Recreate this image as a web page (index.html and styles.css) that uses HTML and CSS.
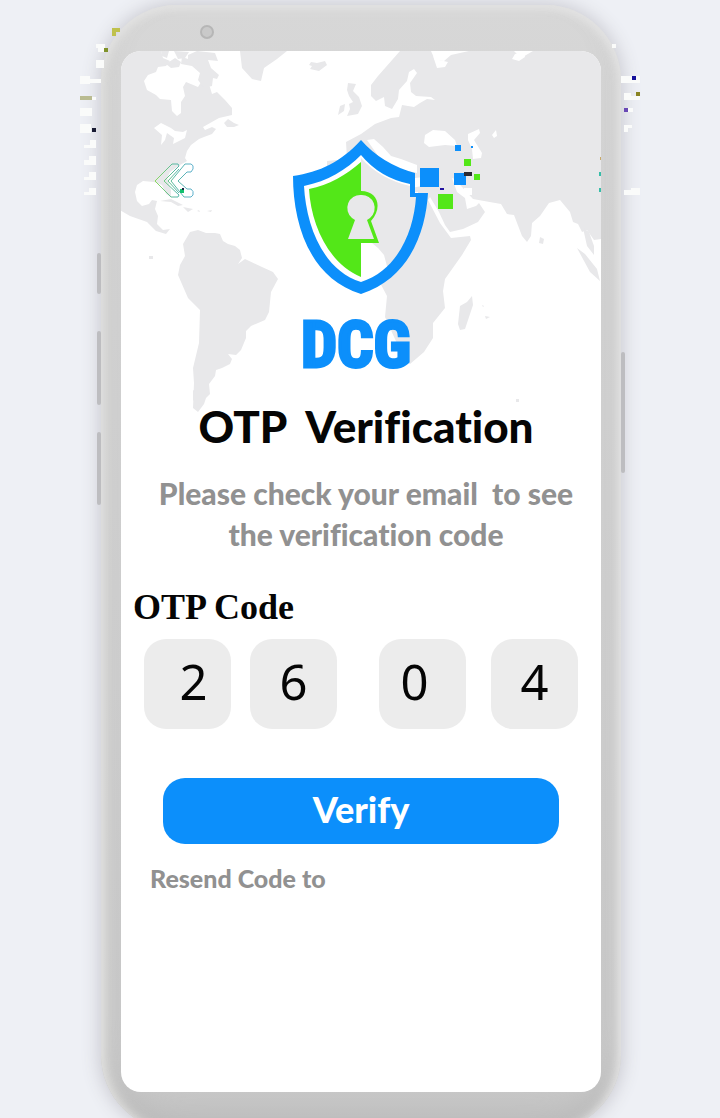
FILE: index.html
```html
<!DOCTYPE html>
<html lang="en">
<head>
<meta charset="utf-8">
<meta name="viewport" content="width=device-width, initial-scale=1">
<title>OTP Verification</title>
<link rel="stylesheet" href="styles.css">
</head>
<body>
<div class="stage">
<div class="phone">
  <svg class="specks" viewBox="80 28 560 170" aria-hidden="true">
    <g fill="#fafbfa">
      <path d="M96 44h9v8h-7v-4h-2zM96 60h8v8h-8zM80 76h10v3h11v4H90v1H80zM92 97h4v3h-4zM80 108h12v8H80zM80 124h11v9H80zM84 145h6v-5h6v8H84zM84 160h5v-4h7v9H84zM84 177h5v-5h7v8H84zM84 192h5v-4h7v7H84z"/>
      <path d="M612 44h4v4h-4zM621 76h19v7h-19zM624 93h7v3h9v4h-16zM624 108h9v4h-9zM624 125h8v3h-4v4h-4zM624 190h7v-2h9v7h-16z"/>
    </g>
    <path fill="#bfc14c" d="M112 28h8v4h-4v4h-4z"/>
    <path fill="#7f922b" d="M104 48h4v4h-4z"/>
    <path fill="#b9bb91" d="M80 96h12v4H80z"/>
    <path fill="#181a32" d="M92 128h4v4h-4z"/>
    <path fill="#16119b" d="M632 76h4v4h-4z"/>
    <path fill="#8a8423" d="M636 92h4v4h-4z"/>
    <path fill="#6948b5" d="M624 108h4v4h-4z"/>
  </svg>
  <span class="camera"></span>
  <span class="key key-mute"></span>
  <span class="key key-up"></span>
  <span class="key key-down"></span>
  <span class="key key-power"></span>
  <main class="screen">
    <svg class="map" viewBox="121 51 480 370" aria-hidden="true">
      <g fill="#e8e8ea">
        <path d="M121 51h40l2 7 7 3-4 5-8 1-2 5-8 3-4 6 3 9 9 5 4 4 11 1 1 11 5 5 4-3v-11l4-6-2-9 3-5 12 5 5-8 6 5 3 10 5-2 8 8 7 8v7l-13 3-16 9 2 3 7-3 4 2-4 5-8 3-5 2-8 6-4 6-2 7 2 3-7 4-10 7-3 6 4 12v7l-5-3-4-9-8-3-11-1-6 4-2 7 2 9 5 5 7-2 3-4 5 1-2 8 3 7-1 8 6 6 7-1-4 5-10-3-9-9-17-6-12-7z"/>
        <path d="M161 51h8l-2 7-5-2zM174 51l15 1-4 6-7 1zM166 64l9-6 6 4-2 5-8 1zM188 55l9-4 18 2 3 8-10-1 3 8 8 7-2 4-4-1-1 8-8 2-6-8 2-7-8-7-11-2 1-7 6 2zM224 123l4-4 6 4 5 2-5 2-7 0zM183 102l7-1 4 4-5 2zM160 201l11-2 12 6-5 1-7-4zM183 207l10 2-5 3zM197 211l2-1 1 2zM207 211l5-1-1 2z"/>
        <path d="M190 232l8-2 8 3h9l5 1 3 7 5 3 7 2 5 4 2 8-4 6 7-5 17 8 11 5 5 7-7 13-2 20-4 8-14 6-5 5v7l-5 12-5 5-8-1 4 5-2 5-8 4-6 2-1 6-6 8 1 10-4 4-2 6-6 8-5-4 1-25-1-15 6-25 1-33-12-12-10-23 2-10 5-9-2-12z"/>
        <path d="M240 51h47l-10 8-13 9-3 13-9-2-10-11zM311 62l6 1 8-2 2 4-8 6-9-2 2-3-3-1zM348 83l8 1-3 7 6 6 3 9-4 8-11 2 3-7-1-5 4-2-4-6-2-6zM340 106l5-2-1 7-6 4zM149 256h4v3h-4zM194 374l2 1v7l-2-1zM193 390l3 2-1 10-2-2zM516 399h3v3h-3z"/>
        <path fill-rule="evenodd" d="M400 51h31l4 9 9 1 7-6 18-4h45l7 7 12-7h68v188l-7 1-7-10-5 2-4-8-5-2-3-10-10-12-11 3-9 13-8 7-1 13-4 6-5-6-8-21-7-1-6-10-17-3-11-2-11-12-7-8-3-1 5 14 8 6 2 11 9-3 3-3 6 9-7 10-15 7-13 3-5-7-6-13-9-15-2 3 12 23 11 15 19-2 1 4-9 15-17 24-2 12 2 17-12 15v15l-9 14-14 12-9-4-1-10-15-33 2-21-10-19-1-20-10-7-6 2-20-2-20-14v-35l17-23 19-2 14 4 8 6 20-2 13 4 11-2 1-9-15 2-12-3-2-8-6-10-7-1 8 12-5 8-7-12-8-6-5-2-11 6-3 9-7 8-16 1v-20l20-2-1-17 15-8 14-10 16-6 8-1 3-12 12 2 6-4 7-4 8 1-4-3-15-1-5-4-1-9 7-10-3-4-5 3-2 9-8 9-1 9-6 10-7-3-1-9-8 4-5-5v-11l7-9zM425 135l8-5 12 1 10 9 2 6-12-1-16 2-5-4zM468 134l11-5 1 4-6 7 8 13-1 5-8 1-1-10-4-9zM492 135l4-5 1 6-3 2z"/>
        <path d="M472 296l1 9-8 24-5 1-2-6 2-18 7-4zM577 248l8 6 12 15 3 12-10-9zM583 228l6 4 5 14 0 9-7-9zM540 237l4 2-1 5-4-1zM482 305l2 1-1 1zM485 316l5 1-4 2z"/>
      </g>
      <g fill="#fff">
        <path d="M154 128l7-5 10 5 4 3 8 1 4-2-2 8-12 6 1-6-7-5-2 7-4 5 1-10z"/>
        <path d="M433 56l6 4 9 2-3 5-8 1-2-6zM515 54l9-2 1 5-6 4-7-2z"/>
        <path d="M367 140l7-1 9 8 8 9 10 3 16 6v8l-22-5-14-8z"/>
        <path d="M464 188h8v7h-8z"/>
      </g>
      <path fill="#c9aa6a" d="M600 157h1v3h-1z"/>
      <path fill="#37bda8" d="M599 172h2v4h-2zM599 188h2v4h-2z"/>
    </svg>

    <header class="brand">
      <button class="back" type="button" aria-label="Back">
        <svg viewBox="153 161 44 38" width="44" height="38" aria-hidden="true">
          <defs>
            <linearGradient id="fade" x1="154" y1="0" x2="194" y2="0" gradientUnits="userSpaceOnUse">
              <stop offset="0" stop-color="#8fdc5a"/>
              <stop offset=".5" stop-color="#57b8a0"/>
              <stop offset="1" stop-color="#5fb0cf"/>
            </linearGradient>
          </defs>
          <g fill="none" stroke="url(#fade)" stroke-linejoin="round">
            <path d="M172 164h6l1 2-15 15 15 14-1 2h-7L155 181z"/>
            <path d="M179 169l-11 12 11 12"/>
            <path d="M185 164h6q3 1 2 5l-2 3h-4l-9 9 9 8h4q3 2 2 6l-2 2h-7l-13-16z"/>
          </g>
          <path fill="#12c06d" d="M180 189h4v4h-4z"/>
          <path fill="#17203f" d="M182 188h2v2h-2z"/>
        </svg>
      </button>
      <svg class="shield" viewBox="291 138 192 158" role="img" aria-label="DCG shield">
        <path fill="#fff" d="M361 152C345 168 326 180 302 184C304 226 323 270 361 284C399 270 417 229 418 192H409V183Q380 175 361 152Z"/>
        <path fill="#e8e8ea" d="M361 158Q380 179 410 186V196H417C414 232 404 254 388 270L384 255L378 248L372 243H361Z"/>
        <path fill="#0c8ffb" fill-rule="evenodd" d="M361 140C341 162 320 172 293 176C293 223 309 278 361 294C411 278 426 229 428 193H415V173Q382 164 361 140ZM361 155C346 170 328 181 304 186C306 224 322 270 361 282C399 270 414 229 416 197H410V184Q380 178 361 155Z"/>
        <path fill="#53e718" d="M361 162C346 175 329 185 309 189C311 225 329 264 361 277V243H379L371 221C383 208 378 191 361 191Z"/>
        <path fill="#e8e8ea" d="M361 195a13 13 0 0 1 9 23l-3 2 7 19h-26l7-19-3-2a13 13 0 0 1 9-23z"/>
        <path fill="#0c8ffb" d="M420 168h19v19h-19zM454 173h12v12h-12zM455 145h6v6h-6zM471 146h2v2h-2z"/>
        <path fill="#53e718" d="M438 194h15v15h-15zM464 159h7v7h-7zM474 174h6v6h-6z"/>
        <path fill="#2a2931" d="M464 172h8v4h-8z"/>
        <path fill="#21119f" d="M440 188h4v2h-4z"/>
      </svg>
      <p class="wordmark">DCG</p>
    </header>

    <form class="otp">
      <h1 class="title">OTP&nbsp; Verification</h1>
      <p class="hint">Please check your email&nbsp; to see<br>the verification code</p>
      <fieldset class="code">
        <legend class="code-label">OTP Code</legend>
        <div class="digits">
          <div class="pair">
            <input class="digit digit-end" type="text" inputmode="numeric" maxlength="1" value="2" aria-label="Digit 1">
            <input class="digit" type="text" inputmode="numeric" maxlength="1" value="6" aria-label="Digit 2">
          </div>
          <div class="pair pair-wide">
            <input class="digit digit-start" type="text" inputmode="numeric" maxlength="1" value="0" aria-label="Digit 3">
            <input class="digit" type="text" inputmode="numeric" maxlength="1" value="4" aria-label="Digit 4">
          </div>
        </div>
      </fieldset>
      <button class="verify" type="button">Verify</button>
      <a class="resend" href="#">Resend Code to</a>
    </form>
  </main>
</div>
</div>
</body>
</html>
```
FILE: styles.css
```css
* {
  box-sizing: border-box;
}

body {
  margin: 0;
  background: #eef0f5;
  font-family: Lato, "Open Sans", sans-serif;
  font-variant-ligatures: none;
}

.stage {
  display: flex;
  justify-content: center;
  align-items: flex-start;
  height: 100vh;
  padding: 5px 20px 0 22px;
  overflow: hidden;
}

.phone {
  position: relative;
  display: flex;
  flex-direction: column;
  flex: 0 1 520px;
  min-height: calc(100vh + 8px);
  padding: 46px 20px 39px;
  border-radius: 76px;
  background: linear-gradient(180deg, #d7d7d7 0%, #d3d3d3 20%, #cecece 60%, #c7c7c7 100%);
  box-shadow: 0 0 18px 2px #c9c9d0, inset 0 5px 8px #e2e2e2, inset -8px 0 12px -4px #e2e2e2, inset 10px 0 12px -4px #dcdcda, inset 0 -20px 36px -8px #b5b5b5;
}

.specks {
  position: absolute;
  top: 23px;
  left: -21px;
  width: calc(100% + 40px);
}

.camera {
  position: absolute;
  top: 20px;
  left: 99px;
  width: 14px;
  height: 14px;
  border: 2px solid #b6b6b6;
  border-radius: 50%;
  background: #c9c9c9;
}

.key {
  position: absolute;
  left: -4px;
  width: 4px;
  border-radius: 2px;
  background: #bdbdc0;
}

.key-mute {
  top: 248px;
  height: 41px;
}

.key-up {
  top: 326px;
  height: 74px;
}

.key-down {
  top: 427px;
  height: 73px;
}

.key-power {
  top: 347px;
  right: -4px;
  left: auto;
  height: 121px;
}

.screen {
  position: relative;
  display: flex;
  flex-direction: column;
  flex: 1;
  border-radius: 20px;
  background: #fff;
  overflow: hidden;
}

.map {
  position: absolute;
  top: 0;
  left: 0;
  width: 100%;
}

.brand {
  position: relative;
  display: grid;
  grid-template-columns: 170px 1fr;
  padding-top: 87px;
}

.back {
  justify-self: end;
  width: 138px;
  height: 61px;
  padding: 23px 0 0;
  border: 0;
  background: none;
  text-align: left;
  cursor: pointer;
}

.back svg {
  display: block;
}

.shield {
  width: 192px;
  height: 158px;
}

.wordmark {
  grid-column: 1 / -1;
  margin: 18px 10px 0 0;
  color: #0c8ffb;
  font: 700 64px/64px "Liberation Sans Narrow", "Roboto Condensed", "DejaVu Sans Condensed", sans-serif;
  text-align: center;
  -webkit-text-stroke: 3px #0c8ffb;
}

.otp {
  position: relative;
  display: flex;
  flex-direction: column;
  padding: 20px 12px 0;
}

.title {
  margin: 0 0 19px 10px;
  color: #050505;
  font-size: 44px;
  font-weight: 900;
  line-height: 56px;
  text-align: center;
}

.hint {
  margin: 0 0 0 10px;
  color: #919191;
  font-size: 30px;
  font-weight: 900;
  line-height: 41px;
  text-align: center;
}

.code {
  min-width: 0;
  margin: 28px 0 0;
  padding: 0;
  border: 0;
}

.code-label {
  padding: 0;
  color: #050505;
  font: 700 36px/48px "Liberation Serif", serif;
}

.digits {
  display: flex;
  justify-content: space-between;
  gap: 20px;
  padding: 8px 11px 0;
}

.pair {
  display: flex;
  gap: 19px;
}

.pair-wide {
  gap: 25px;
}

.digit {
  width: 87px;
  min-width: 0;
  height: 90px;
  padding: 0 0 6px;
  border: 0;
  border-radius: 22px;
  background: #ececec;
  color: #050505;
  font: 400 49px/60px "Noto Sans", sans-serif;
  text-align: center;
}

.digit-end {
  padding-left: 12px;
}

.digit-start {
  padding-right: 16px;
}

.verify {
  height: 66px;
  margin: 49px 30px 0;
  padding: 0 0 4px;
  border: 0;
  border-radius: 22px;
  background: #0c8ffb;
  color: #fff;
  font: 900 36px/60px Lato, sans-serif;
  cursor: pointer;
}

.resend {
  align-self: flex-start;
  margin: 18px 0 0 17px;
  color: #919191;
  font-size: 25px;
  font-weight: 900;
  line-height: 32px;
  text-decoration: none;
}
```
